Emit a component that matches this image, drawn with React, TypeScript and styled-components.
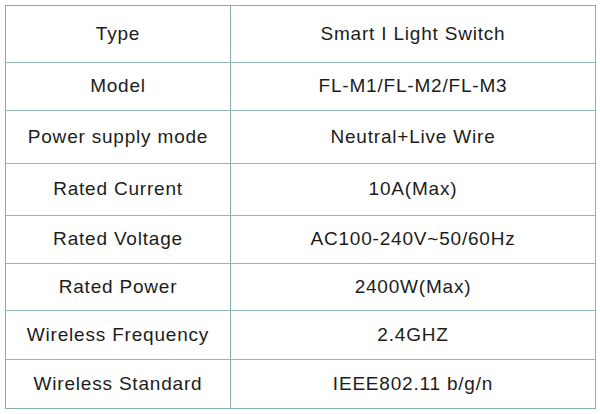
import styled, { createGlobalStyle } from "styled-components";

const specs = [
  { label: "Type", value: "Smart I Light Switch", height: 56 },
  { label: "Model", value: "FL-M1/FL-M2/FL-M3", height: 48 },
  { label: "Power supply mode", value: "Neutral+Live Wire", height: 53 },
  { label: "Rated Current", value: "10A(Max)", height: 52 },
  { label: "Rated Voltage", value: "AC100-240V~50/60Hz", height: 48 },
  { label: "Rated Power", value: "2400W(Max)", height: 47 },
  { label: "Wireless Frequency", value: "2.4GHZ", height: 49 },
  { label: "Wireless Standard", value: "IEEE802.11 b/g/n", height: 49 },
];

const GlobalStyle = createGlobalStyle`
  body {
    margin: 0;
    background: #fff;
    font-family: "Liberation Sans", Arial, sans-serif;
  }
`;

export default function App() {
  return (
    <>
      <GlobalStyle />
      <Page>
        <SpecTable>
          {specs.map((row, i) => (
            <Row key={row.label} $height={row.height} $first={i === 0}>
              <LabelCell>{row.label}</LabelCell>
              <ValueCell>{row.value}</ValueCell>
            </Row>
          ))}
        </SpecTable>
      </Page>
    </>
  );
}

const Page = styled.div`
  width: 600px;
  height: 414px;
  padding: 5px 0 0 5px;
  box-sizing: border-box;
`;

const SpecTable = styled.div`
  width: 591px;
  border: 1px solid #86acb0;
  box-sizing: border-box;
  display: flex;
  flex-direction: column;
`;

const Row = styled.div<{ $height: number; $first: boolean }>`
  display: grid;
  grid-template-columns: 225px 1fr;
  height: ${(p) => p.$height}px;
  box-sizing: border-box;
  border-top: ${(p) => (p.$first ? "none" : "1px solid #93b6ba")};
`;

const Cell = styled.div`
  display: flex;
  align-items: center;
  justify-content: center;
  font-size: 19px;
  letter-spacing: 0.8px;
  color: #1c1c1c;
  padding-bottom: 1px;
`;

const LabelCell = styled(Cell)`
  border-right: 1px solid #86acb0;
`;

const ValueCell = styled(Cell)``;
